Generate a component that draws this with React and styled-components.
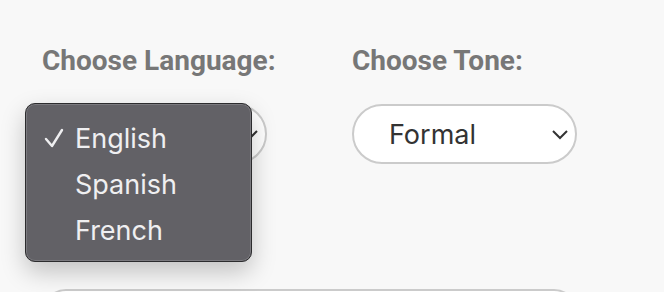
import React from "react";
import styled, { createGlobalStyle } from "styled-components";

const Global = createGlobalStyle`
  html, body {
    margin: 0;
    background: #f8f8f8;
  }
  body {
    font-family: Roboto, "Liberation Sans", sans-serif;
  }
`;

const Page = styled.div`
  padding: 44px 42px 0 42px;
  display: flex;
  flex-direction: column;
  height: 292px;
  box-sizing: border-box;
  overflow: hidden;
`;

const Row = styled.div`
  display: flex;
  gap: 85px;
`;

const Field = styled.div`
  position: relative;
  width: 225px;
  display: flex;
  flex-direction: column;
  gap: 26px;
`;

const Label = styled.label`
  font-size: 28px;
  font-weight: 700;
  color: #777;
  white-space: nowrap;
  line-height: 34px;
`;

const SelectBox = styled.div`
  box-sizing: border-box;
  height: 60px;
  border: 2px solid #cbcbcb;
  border-radius: 30px;
  background: #fff;
  display: flex;
  align-items: center;
  justify-content: space-between;
  padding: 0 6px 0 35px;
  font-family: Inter, "Open Sans", sans-serif;
  font-size: 27px;
  color: #333;
`;

const Chevron = () => (
  <svg width="18" height="12" viewBox="0 0 18 12">
    <path d="M2 3l7 7 7-7" fill="none" stroke="#333" strokeWidth="2" />
  </svg>
);

const Menu = styled.ul`
  position: absolute;
  left: -17px;
  top: 59px;
  width: 227px;
  height: 159px;
  box-sizing: border-box;
  margin: 0;
  padding: 11px 0 0;
  list-style: none;
  background: #626166;
  border: 1px solid #2c2c2e;
  border-radius: 10px;
  box-shadow: inset 0 0 0 1px #7b7a7f, 0 10px 24px rgba(0, 0, 0, 0.22);
  font-family: Inter, "Open Sans", sans-serif;
  font-size: 27px;
  color: #efeff1;
  z-index: 2;
`;

const Option = styled.li`
  height: 46px;
  display: flex;
  align-items: center;
  padding-left: 49px;
  position: relative;
`;

const Check = styled.svg`
  position: absolute;
  left: 18px;
  top: 13px;
`;

const TextBox = styled.div`
  box-sizing: border-box;
  width: 536px;
  height: 80px;
  flex-shrink: 0;
  border: 2px solid #cbcbcb;
  border-radius: 24px;
  background: #fff;
  margin-top: 125px;
`;

export default function App() {
  return (
    <>
      <Global />
      <Page>
        <Row>
          <Field>
            <Label>Choose Language:</Label>
            <SelectBox>
              English
              <Chevron />
            </SelectBox>
            <Menu>
              <Option>
                <Check width="20" height="20" viewBox="0 0 20 20">
                  <path
                    d="M2 11l6 7L18 2"
                    fill="none"
                    stroke="#efeff1"
                    strokeWidth="2.4"
                    strokeLinecap="round"
                    strokeLinejoin="round"
                  />
                </Check>
                English
              </Option>
              <Option>Spanish</Option>
              <Option>French</Option>
            </Menu>
          </Field>
          <Field>
            <Label>Choose Tone:</Label>
            <SelectBox>
              Formal
              <Chevron />
            </SelectBox>
          </Field>
        </Row>
        <TextBox />
      </Page>
    </>
  );
}
